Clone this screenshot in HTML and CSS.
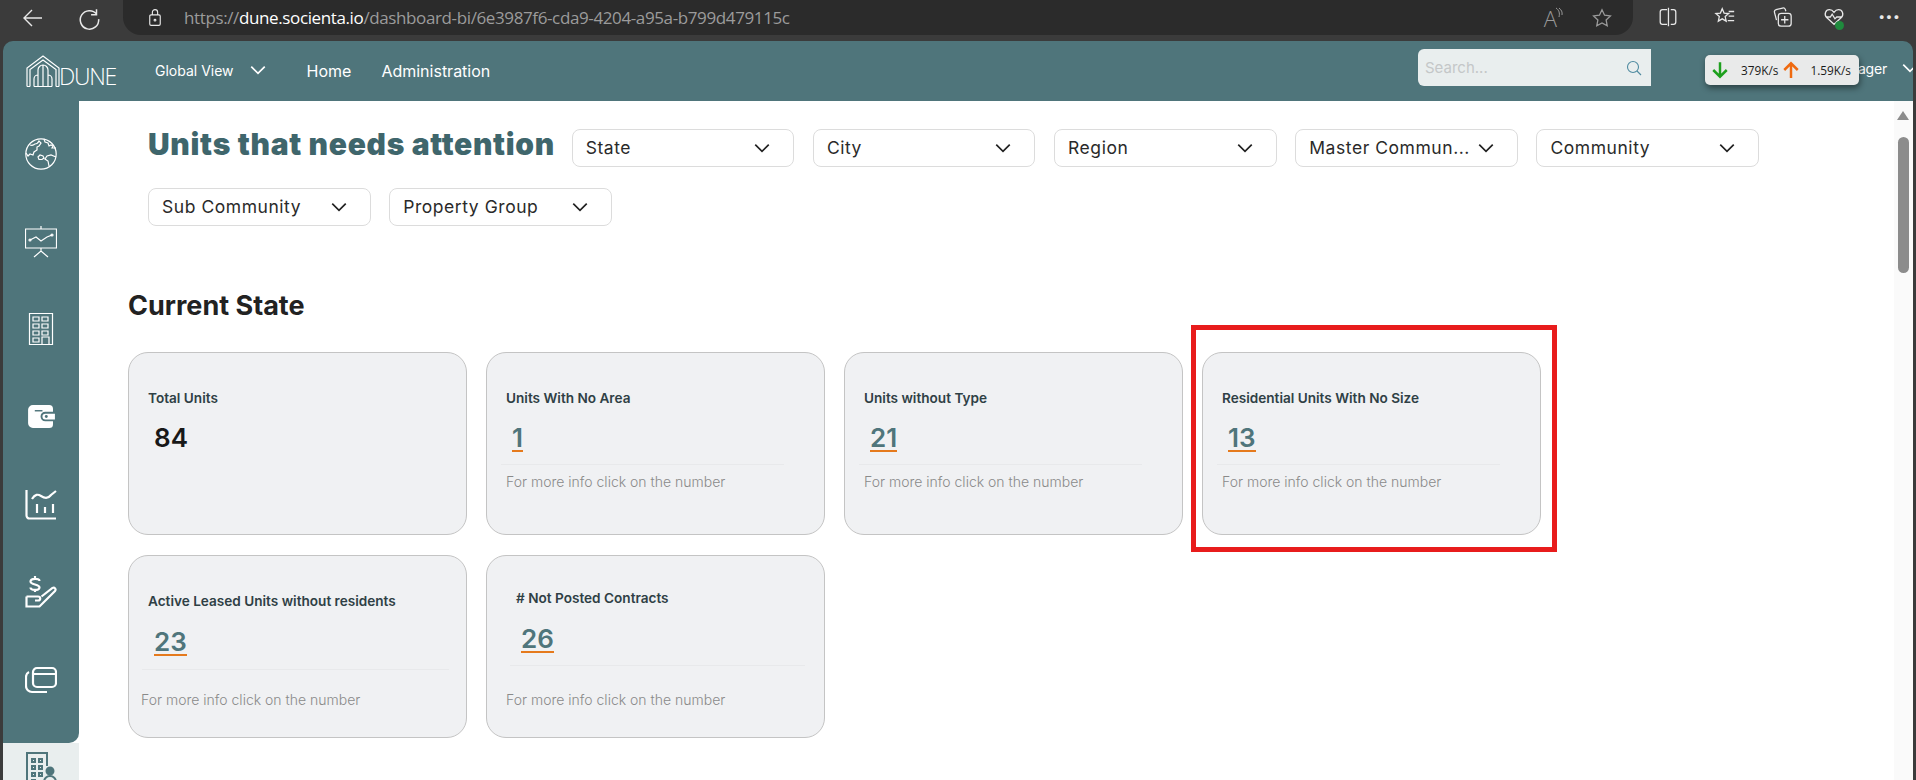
FILE: index.html
```html
<!DOCTYPE html>
<html lang="en">
<head>
<meta charset="utf-8">
<title>Dune</title>
<link rel="stylesheet" href="styles.css">
</head>
<body>
<div class="browser">
  <div class="toolbar">
    <svg class="tb-icon back" viewBox="0 0 24 24"><path d="M21 12H3M11 4l-8 8 8 8"/></svg>
    <svg class="tb-icon reload" viewBox="0 0 24 24"><path d="M18 4v5h-5M18.2 8.5A8.5 8.5 0 1 0 20 13"/></svg>
    <div class="address">
      <svg class="lock" viewBox="0 0 16 20"><rect x="2" y="7" width="12" height="12" rx="1.5"/><path d="M5 7V4a3 3 0 0 1 6 0v3"/><circle cx="8" cy="13" r="1"/></svg>
      <span class="url"><span class="url-dim">https://</span><span class="url-host">dune.socienta.io</span><span class="url-dim">/dashboard-bi/6e3987f6-cda9-4204-a95a-b799d479115c</span></span>
      <div class="addr-right">
        <span class="read">A<svg class="read-waves" viewBox="0 0 8 12"><path d="M1 1c3 2 4 5 3 9M4 1c2.500 2 3.500 4 3 7"/></svg></span>
        <svg class="tb-icon dim" viewBox="0 0 24 24"><path d="M12 3l2.800 5.900 6.400.8-4.700 4.400 1.200 6.400L12 17.400l-5.700 3.100 1.200-6.400-4.700-4.400 6.400-.8z"/></svg>
      </div>
    </div>
    <div class="tb-actions">
      <svg class="tb-icon" viewBox="0 0 24 24"><path d="M11 4H6a2.500 2.500 0 0 0-2.500 2.500v11A2.500 2.500 0 0 0 6 20h5M15 4h3a2.500 2.500 0 0 1 2.500 2.500v11A2.500 2.500 0 0 1 18 20h-3M12.500 2v20"/></svg>
      <svg class="tb-icon" viewBox="0 0 24 24"><path d="M9 3l2 4.700 5 .5-3.800 3.300 1.100 5L9 14l-4.300 2.500 1.100-5L2 8.200l5-.5zM16 6h6M16 11h6M15 16h7"/></svg>
      <svg class="tb-icon" viewBox="0 0 24 24"><path d="M6 15.500 3.800 7a2.500 2.500 0 0 1 1.800-3l7-1.800a2.500 2.500 0 0 1 3 1.500l.6 2"/><rect x="8" y="8" width="14" height="14" rx="3"/><path d="M15 11v8M11 15h8"/></svg>
      <span class="health">
        <svg class="tb-icon" viewBox="0 0 24 24"><path d="M12 20 4 12.500C.8 9.300 2.800 4 7 4c2.200 0 3.800 1.200 5 3 1.200-1.800 2.800-3 5-3 4.200 0 6.200 5.300 3 8.500L12 20zM3 12h5l2-3 3 5 2-2h6"/></svg>
        <span class="health-dot"></span>
      </span>
      <span class="more">···</span>
    </div>
  </div>

  <div class="app">
    <header class="topbar">
      <div class="logo">
        <svg class="logo-mark" viewBox="0 0 34 32"><path d="M1 31.500V13L17 1l16 12v18.500M4 31.500V14.500L17 5l13 9.500v17M1 31.500h3M30 31.500h3M8 31.500V24a4 4 0 0 1 4-4M26 31.500V24a4 4 0 0 0-4-4M12 31.500V15a5 5 0 0 1 10 0v16.500M17 10v21.500M8 31.500h18"/></svg>
        <span class="logo-text">DUNE</span>
      </div>
      <nav class="nav">
        <span class="nav-scope">Global View</span>
        <svg class="chev chev-white" viewBox="0 0 16 16"><path d="M2 5l6 6 6-6"/></svg>
        <a class="nav-link nav-home">Home</a>
        <a class="nav-link">Administration</a>
      </nav>
      <div class="search">
        <span class="search-text">Search...</span>
        <svg class="search-icon" viewBox="0 0 16 16"><circle cx="7" cy="7" r="5.500"/><path d="M11 11l4 4"/></svg>
      </div>
      <div class="user">
        <span class="user-name">Manager</span>
        <svg class="chev chev-white" viewBox="0 0 16 16"><path d="M2 5l6 6 6-6"/></svg>
      </div>
    </header>

    <div class="body">
      <aside class="sidebar">
        <div class="side-main">
          <div class="side-item"><svg class="side-icon" viewBox="0 0 32 32"><circle cx="16" cy="16" r="15.200"/><path d="M5 7c3 1 3 0 5-1 2 0 3-1 4-3l2 2-2 3-2 1v3l-3 2-1 3-3-1-2 2-2-3M19 1l1 3 3 1 1 3 2-1 2 1-1 2h4M13 19l2-2 3 1 1 2-2 1.500h-3zM24 28l-1-5-3-2 2-3 4-1 5 2"/></svg></div>
          <div class="side-item"><svg class="side-icon" viewBox="0 0 32 32"><path d="M.5 3h31v19H.5zM16 0v3M16 22v3M9 31l7-6 7 6M5 14l6-3 5 4 6-4 5-2"/><circle cx="5" cy="14" r="1"/><circle cx="27" cy="9" r="1"/></svg></div>
          <div class="side-item"><svg class="side-icon" viewBox="0 0 24 32"><path d="M.5.500h23v31H.5z"/><path d="M4 4h6v4H4zM13 4h6v4h-6zM4 11h6v4H4zM13 11h6v4h-6zM4 18h6v4H4zM13 18h6v4h-6zM4 25h6v4H4zM13 24h7v7.500h-7z"/></svg></div>
          <div class="side-item"><svg class="side-icon solid" viewBox="0 0 28 24"><path d="M5 0h17a4 4 0 0 1 4 4v3h-8a5 5 0 0 0 0 10h8v3a4 4 0 0 1-4 4H5a5 5 0 0 1-5-5V5a5 5 0 0 1 5-5zM18 9h10v6H18a3 3 0 0 1 0-6z"/><circle class="cut" cx="19" cy="12" r="1.500"/><path class="cut-line" d="M7 6h8"/></svg></div>
          <div class="side-item"><svg class="side-icon bold" viewBox="0 0 32 32"><path d="M1.500 1v25.500a3 3 0 0 0 3 3H31M7 10c3-5 6-5 9-3s7 3 10-1l5-4M12 15v9M20 18v6M28 15v9"/></svg></div>
          <div class="side-item"><svg class="side-icon bold" viewBox="0 0 32 32"><path d="M10 0v2M14.500 5c0-3-9-3-9 .500s9 2.500 9 6-9 3-9 0M10 14v2M1.500 20.500H13c3 0 3 4 0 4h-3M1.500 20.500v10h13L30 15c1.500-2-.500-4-2.500-3l-11 8.500"/></svg></div>
          <div class="side-item"><svg class="side-icon bold" viewBox="0 0 32 26"><rect x="8" y="1" width="23" height="19" rx="4"/><path d="M8 7h23M4 5C2 6 1 8 1 10v9a6 6 0 0 0 6 6h15"/></svg></div>
        </div>
        <div class="side-foot"><svg class="foot-icon" viewBox="0 0 32 36"><path d="M22 14V1H2v34h14M7 7h3v3H7zM14 7h3v3h-3zM7 14h3v3H7zM14 14h3v3h-3zM7 21h3v3H7zM14 21h3v3h-3zM7 28h3v3H7z"/><circle class="foot-solid" cx="25" cy="19" r="3.500"/><path d="M19 35v-5a6 6 0 0 1 12 0v5z"/></svg></div>
      </aside>

      <main class="content">
        <div class="filters">
          <h1 class="page-title">Units that needs attention</h1>
          <div class="select"><span>State</span><svg class="chev" viewBox="0 0 16 16"><path d="M2 5l6 6 6-6"/></svg></div>
          <div class="select"><span>City</span><svg class="chev" viewBox="0 0 16 16"><path d="M2 5l6 6 6-6"/></svg></div>
          <div class="select"><span>Region</span><svg class="chev" viewBox="0 0 16 16"><path d="M2 5l6 6 6-6"/></svg></div>
          <div class="select"><span>Master Commun...</span><svg class="chev" viewBox="0 0 16 16"><path d="M2 5l6 6 6-6"/></svg></div>
          <div class="select"><span>Community</span><svg class="chev" viewBox="0 0 16 16"><path d="M2 5l6 6 6-6"/></svg></div>
          <div class="select"><span>Sub Community</span><svg class="chev" viewBox="0 0 16 16"><path d="M2 5l6 6 6-6"/></svg></div>
          <div class="select"><span>Property Group</span><svg class="chev" viewBox="0 0 16 16"><path d="M2 5l6 6 6-6"/></svg></div>
        </div>
        <h2 class="section-title">Current State</h2>
        <div class="cards">
          <article class="card">
            <h3 class="card-title">Total Units</h3>
            <div class="num num-plain">84</div>
          </article>
          <article class="card">
            <h3 class="card-title">Units With No Area</h3>
            <div class="num"><a class="num-link">1</a></div>
            <hr class="rule">
            <p class="hint">For more info click on the number</p>
          </article>
          <article class="card">
            <h3 class="card-title">Units without Type</h3>
            <div class="num"><a class="num-link">21</a></div>
            <hr class="rule">
            <p class="hint">For more info click on the number</p>
          </article>
          <article class="card">
            <h3 class="card-title">Residential Units With No Size</h3>
            <div class="num"><a class="num-link">13</a></div>
            <hr class="rule">
            <p class="hint">For more info click on the number</p>
          </article>
          <article class="card card-low">
            <h3 class="card-title">Active Leased Units without residents</h3>
            <div class="num"><a class="num-link">23</a></div>
            <hr class="rule">
            <p class="hint">For more info click on the number</p>
          </article>
          <article class="card card-alt">
            <h3 class="card-title">#&nbsp;Not Posted Contracts</h3>
            <div class="num"><a class="num-link">26</a></div>
            <hr class="rule">
            <p class="hint">For more info click on the number</p>
          </article>
        </div>
        <div class="scrollbar">
          <span class="scroll-up"></span>
          <span class="scroll-thumb"></span>
        </div>
      </main>
    </div>
  </div>

  <div class="netspeed">
    <svg class="arrow arrow-down" viewBox="0 0 14 16"><path d="M7 1v13M1 8l6 6 6-6"/></svg>
    <span class="net-val">379K/s</span>
    <svg class="arrow arrow-up" viewBox="0 0 14 16"><path d="M7 15V2M1 8l6-6 6 6"/></svg>
    <span class="net-val net-up">1.59K/s</span>
  </div>
  <div class="highlight"></div>
</div>
</body>
</html>
```

FILE: styles.css
```css
* { box-sizing: border-box; }
html, body { margin: 0; height: 780px; overflow: hidden; background: #3b3b3b; }
body { font-family: Inter, "Liberation Sans", sans-serif; }

.browser { position: relative; width: 1916px; height: 780px; display: flex; flex-direction: column; background: #3b3b3b; }

/* browser toolbar */
.toolbar { height: 41px; display: flex; align-items: flex-start; padding-left: 21px; flex: none; }
.tb-icon { width: 22px; height: 22px; fill: none; stroke: #e8e8e8; stroke-width: 1.400; flex: none; }
.back { margin-top: 6px; width: 24px; height: 24px; }
.reload { margin: 5px 0 0 32px; width: 26px; height: 26px; }
.address { margin-left: 20px; width: 1510px; height: 35px; background: #2b2b2b; border-radius: 0 0 18px 18px; display: flex; align-items: center; padding: 0 20px 0 25px; }
.lock { width: 14px; height: 19px; fill: none; stroke: #e8e8e8; stroke-width: 1.300; flex: none; }
.url { margin-left: 22px; font-family: "Open Sans", sans-serif; font-size: 17px; letter-spacing: -.38px; white-space: nowrap; }
.url-dim { color: #9b9b9b; }
.url-host { color: #fff; }
.addr-right { margin-left: auto; display: flex; align-items: center; gap: 28px; }
.read { position: relative; color: #9a9a9a; font-family: "Open Sans", sans-serif; font-size: 22px; font-weight: 300; line-height: 1; padding-right: 6px; }
.read-waves { position: absolute; right: 0; top: 0; width: 8px; height: 12px; fill: none; stroke: #9a9a9a; stroke-width: 1; }
.dim { stroke: #9a9a9a; }
.tb-actions { display: flex; align-items: center; gap: 35px; margin-left: 24px; padding-top: 6px; }
.health { position: relative; display: flex; margin-left: -5px; }
.health-dot { position: absolute; right: 1px; bottom: -2px; width: 9px; height: 9px; border-radius: 50%; background: #1f8a3d; }
.more { color: #e8e8e8; font-size: 22px; font-weight: 700; line-height: 20px; margin-left: -2px; }

/* app shell */
.app { margin-left: 3px; width: 1910px; height: 739px; display: flex; flex-direction: column; background: #4f757b; border-radius: 10px 10px 0 0; overflow: hidden; }
.topbar { height: 60px; flex: none; display: flex; align-items: center; padding-left: 23px; color: #fff; }
.logo { display: flex; align-items: flex-end; width: 129px; }
.logo-mark { width: 34px; height: 32px; fill: none; stroke: #fff; stroke-width: 1.200; flex: none; }
.logo-text { font-family: "Open Sans", sans-serif; font-weight: 300; font-size: 23px; line-height: 21px; letter-spacing: -1.300px; margin-left: -1px; }
.nav { display: flex; align-items: center; }
.nav-scope { font-size: 14px; margin-top: -2px; }
.chev { width: 18px; height: 18px; fill: none; stroke: #222; stroke-width: 1.500; flex: none; }
.chev-white { stroke: #fff; margin: -2px 0 0 15px; }
.nav-link { font-size: 16px; margin-left: 30px; }
.nav-home { margin-left: 40px; }
.search { margin: -7px 0 0 auto; width: 233px; height: 37px; flex: none; background: #e9eeee; border-radius: 6px 0 0 6px; display: flex; align-items: center; justify-content: space-between; padding: 0 9px 0 7px; }
.search-text { color: #c4c7c8; font-size: 15px; }
.search-icon { width: 16px; height: 16px; fill: none; stroke: #4f8ba0; stroke-width: 1.100; }
.user { width: 262px; flex: none; display: flex; align-items: center; justify-content: flex-end; margin-top: -6px; font-size: 14px; letter-spacing: -.2px; }
.user-name { white-space: nowrap; }
.user .chev-white { margin: 0 -6px 0 14px; }

.body { flex: 1; display: flex; min-height: 0; }
.sidebar { width: 76px; flex: none; display: flex; flex-direction: column; background: #fff; }
.side-main { height: 642px; background: #4f757b; border-bottom-right-radius: 10px; display: flex; flex-direction: column; padding-top: 9px; }
.side-item { height: 87.700px; display: flex; align-items: center; justify-content: center; flex: none; }
.side-icon { width: 32px; height: 32px; fill: none; stroke: #fff; stroke-width: 1.200; }
.side-icon.bold { stroke-width: 2.200; }
.side-icon.solid { width: 27px; height: 23px; fill: #fff; stroke: none; }
.cut { fill: #4f757b; }
.cut-line { stroke: #4f757b; stroke-width: 1.500; fill: none; }
.side-foot { flex: 1; background: #e9eeee; display: flex; justify-content: center; padding-top: 9px; overflow: hidden; }
.foot-icon { width: 32px; height: 36px; flex: none; fill: none; stroke: #4f757b; stroke-width: 2; }
.foot-solid { fill: #4f757b; }

/* main */
.content { position: relative; flex: 1; min-width: 0; background: #fff; padding: 28px 0 0 69px; overflow: hidden; }
.filters { display: flex; flex-wrap: wrap; align-items: center; gap: 21px 18.700px; width: 1640px; }
.page-title { margin: -8px 0 0; color: #3f666c; font-size: 30px; font-weight: 900; line-height: 34px; width: 405px; white-space: nowrap; letter-spacing: .7px; }
.select { width: 222.500px; height: 38px; border: 1px solid #dcdcdc; border-radius: 8px; display: flex; align-items: center; justify-content: space-between; padding: 0 22px 2px 13px; font-size: 17.500px; letter-spacing: .55px; color: #2a2a2a; background: #fff; white-space: nowrap; }
.select .chev { margin-top: 2px; }
.section-title { margin: 65px 0 0 -20px; color: #222; font-size: 27px; font-weight: 700; line-height: 30px; }
.cards { display: grid; grid-template-columns: repeat(4, 339px); grid-auto-rows: 183px; gap: 20px 19px; margin: 31px 0 0 -20px; }
.card { background: #f0f1f3; border: 1px solid #c4c4c4; border-radius: 20px; padding: 36px 0 0 19px; }
.card-title { margin: 0; color: #2f4045; font-size: 13.600px; font-weight: 600; line-height: 18px; white-space: nowrap; }
.num { display: flex; align-items: flex-start; margin: 16px 0 0 6px; height: 31px; font-size: 26px; font-weight: 600; line-height: 30px; color: #4f757b; }
.num-plain { color: #181818; }
.num-link { display: block; height: 29px; border-bottom: 2px solid #e57a1d; }
.rule { margin: 10px 0 0 -5px; width: 283px; height: 1px; border: 0; background: #e8e9eb; }
.hint { margin: 8px 0 0 0; color: #8a8a8a; font-size: 14px; font-weight: 300; line-height: 18px; white-space: nowrap; }
.card-low { padding-top: 36px; }
.card-low .num { margin-top: 17px; }
.card-low .rule { width: 307px; margin-top: 11px; margin-left: -6px; }
.card-low .hint { margin: 21px 0 0 -7px; }
.card-alt { padding: 33px 0 0 29px; }
.card-alt .num { margin: 17px 0 0 5px; }
.card-alt .rule { width: 295px; margin-left: -6px; }
.card-alt .hint { margin: 25px 0 0 -10px; }

/* scrollbar */
.scrollbar { position: absolute; top: 0; right: 0; bottom: 0; width: 19px; background: #fafafa; }
.scroll-up { position: absolute; left: 3px; top: 10px; width: 0; height: 0; border: 6px solid transparent; border-top: 0; border-bottom: 9px solid #8c8c8c; }
.scroll-thumb { position: absolute; left: 4px; top: 36px; width: 11px; height: 136px; background: #8c8c8c; border-radius: 6px; }

/* overlays */
.netspeed { position: absolute; left: 1705px; top: 55px; width: 154px; height: 30px; background: #e9eaea; border-radius: 5px; box-shadow: 1px 3px 6px rgba(0,0,0,.45); display: flex; align-items: center; padding-left: 7px; font-family: "Open Sans", sans-serif; font-size: 11.800px; color: #1a1a1a; }
.arrow { width: 16px; height: 18px; fill: none; stroke-width: 2.200; flex: none; }
.arrow-down { stroke: #1ea01e; }
.arrow-up { stroke: #ef6a10; margin-left: 5px; }
.net-val { margin-left: 13px; white-space: nowrap; }
.net-up { margin-left: 11px; }
.highlight { position: absolute; left: 1191px; top: 325px; width: 366px; height: 227px; border: 5px solid #e81c1c; }
```
